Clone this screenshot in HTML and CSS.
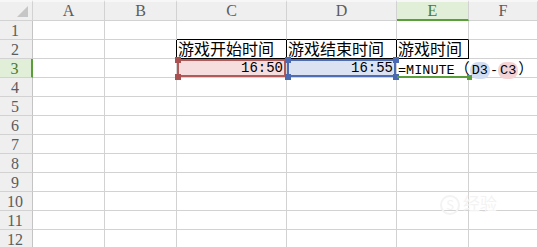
FILE: index.html
```html
<!DOCTYPE html>
<html>
<head>
    <title>Sheet</title>
    <meta charset="utf-8">
    <link rel="stylesheet" href="styles.css">
</head>
<body>
    <div class="sheet">
        <div class="corner"><span class="tri"></span></div>
        <div class="colhead">A</div>
        <div class="colhead">B</div>
        <div class="colhead">C</div>
        <div class="colhead">D</div>
        <div class="colhead active">E</div>
        <div class="colhead">F</div>

        <div class="rowhead">1</div>
        <div class="cell"></div><div class="cell"></div>
        <div class="cell topline"></div><div class="cell topline"></div><div class="cell topline"></div>
        <div class="cell"></div>

        <div class="rowhead">2</div>
        <div class="cell"></div><div class="cell leftline"></div>
        <div class="cell boxed cjk">游戏开始时间</div>
        <div class="cell boxed cjk">游戏结束时间</div>
        <div class="cell boxed cjk">游戏时间</div>
        <div class="cell"></div>

        <div class="rowhead active">3</div>
        <div class="cell"></div><div class="cell"></div>
        <div class="cell num ref-red">16:50<i class="h tl"></i><i class="h bl"></i></div>
        <div class="cell num ref-blue">16:55<i class="h tl"></i><i class="h tr"></i><i class="h bl"></i><i class="h br"></i></div>
        <div class="cell formula">=MINUTE<span class="cjk">（</span><span class="arg blue">D3</span>-<span class="arg red">C3</span><span class="cjk">）</span><i class="h gr"></i></div>
        <div class="cell nosep"></div>

        <div class="rowhead">4</div>
        <div class="cell"></div><div class="cell"></div><div class="cell"></div><div class="cell"></div><div class="cell"></div><div class="cell"></div>
        <div class="rowhead">5</div>
        <div class="cell"></div><div class="cell"></div><div class="cell"></div><div class="cell"></div><div class="cell"></div><div class="cell"></div>
        <div class="rowhead">6</div>
        <div class="cell"></div><div class="cell"></div><div class="cell"></div><div class="cell"></div><div class="cell"></div><div class="cell"></div>
        <div class="rowhead">7</div>
        <div class="cell"></div><div class="cell"></div><div class="cell"></div><div class="cell"></div><div class="cell"></div><div class="cell"></div>
        <div class="rowhead">8</div>
        <div class="cell"></div><div class="cell"></div><div class="cell"></div><div class="cell"></div><div class="cell"></div><div class="cell"></div>
        <div class="rowhead">9</div>
        <div class="cell"></div><div class="cell"></div><div class="cell"></div><div class="cell"></div><div class="cell"></div><div class="cell"></div>
        <div class="rowhead">10</div>
        <div class="cell"></div><div class="cell"></div><div class="cell"></div><div class="cell"></div><div class="cell"></div><div class="cell"></div>
        <div class="rowhead">11</div>
        <div class="cell"></div><div class="cell"></div><div class="cell"></div><div class="cell"></div><div class="cell"></div><div class="cell"></div>
        <div class="rowhead">12</div>
        <div class="cell"></div><div class="cell"></div><div class="cell"></div><div class="cell"></div><div class="cell"></div><div class="cell"></div>

        <div class="mark"><span class="s">S</span>经验</div>
    </div>
</body>
</html>
```

FILE: styles.css
```css
body {
    margin: 0;
    background: #fff;
    overflow: hidden;
}
.sheet {
    position: relative;
    display: grid;
    grid-template-columns: 33px 72px 72px 110px 110px 72px 69px;
    grid-template-rows: 21px repeat(12, 19px);
    font-family: "Liberation Mono", monospace;
    font-size: 13.5px;
    color: #000;
}
.sheet > div {
    box-sizing: border-box;
    border-right: 1px solid #d2d2d2;
    border-bottom: 1px solid #d2d2d2;
}
.corner, .colhead, .rowhead {
    background: #efefef;
    color: #5c5c5c;
    font-family: "Liberation Serif", serif;
    font-size: 16px;
}
.corner {
    position: relative;
    border-top: 2px solid #f7f7f7;
}
.tri {
    position: absolute;
    right: 4px;
    bottom: 3px;
    width: 0;
    height: 0;
    border-left: 11px solid transparent;
    border-bottom: 11px solid #c6c6c6;
}
.colhead {
    border-top: 2px solid #f7f7f7;
    text-align: center;
    line-height: 18px;
}
.colhead.active {
    background: #e1eed8;
    color: #4a7a2e;
    border-bottom: 2px solid #5a9e3c;
}
.rowhead {
    text-align: center;
    line-height: 19px;
    border-right-color: #c4c4c4 !important;
    padding-right: 2px;
}
.rowhead.active {
    background: #e1eed8;
    color: #4a7a2e;
    border-right: 2px solid #5a9e3c !important;
}
.cell {
    position: relative;
    line-height: 18px;
    white-space: nowrap;
}
.cjk {
    font-family: "Noto Sans CJK SC", sans-serif;
    font-size: 16px;
}
.sheet > .topline { border-bottom-color: #000; }
.sheet > .leftline { border-right-color: #000; }
.sheet > .boxed {
    border-right-color: #000;
    border-bottom-color: #000;
    padding-left: 1px;
    line-height: 17px;
}
.num {
    text-align: right;
    padding-right: 3px;
    font-size: 14px;
}
.ref-red {
    background: #f6dede;
    box-shadow: inset 0 0 0 2px #b05a5a;
    z-index: 1;
}
.ref-blue {
    background: #dbe3f3;
    box-shadow: inset 0 0 0 2px #4e6db4;
    z-index: 2;
}
.sheet > .formula {
    border-right: none;
    border-bottom: 2px solid #5a9e3c;
    padding-left: 1px;
    z-index: 3;
    overflow: visible;
}
.formula .cjk { font-size: 15px; }
.arg {
    display: inline-block;
    padding: 0 2px;
    border-radius: 8px;
    line-height: 17px;
}
.arg.blue { background: #d2dcf0; }
.arg.red { background: #f3d3d3; }
.h {
    position: absolute;
    width: 6px;
    height: 6px;
}
.ref-red .h { background: #a95050; }
.ref-blue .h { background: #4a69b0; }
.tl { left: -2px; top: -2px; }
.tr { right: -3px; top: -2px; }
.bl { left: -2px; bottom: -3px; }
.br { right: -3px; bottom: -3px; }
.h.gr {
    background: #5a9e3c;
    width: 5px;
    height: 5px;
    right: -3px;
    bottom: -4px;
}
.mark {
    position: absolute;
    left: 440px;
    top: 193px;
    border: none !important;
    color: #f3f3f3;
    font-family: "Noto Sans CJK SC", sans-serif;
    font-size: 17px;
    line-height: 20px;
}
.mark .s {
    display: inline-block;
    width: 16px;
    height: 16px;
    border: 2px solid #f3f3f3;
    border-radius: 50%;
    text-align: center;
    line-height: 16px;
    font-size: 13px;
    margin-right: 3px;
}
```
